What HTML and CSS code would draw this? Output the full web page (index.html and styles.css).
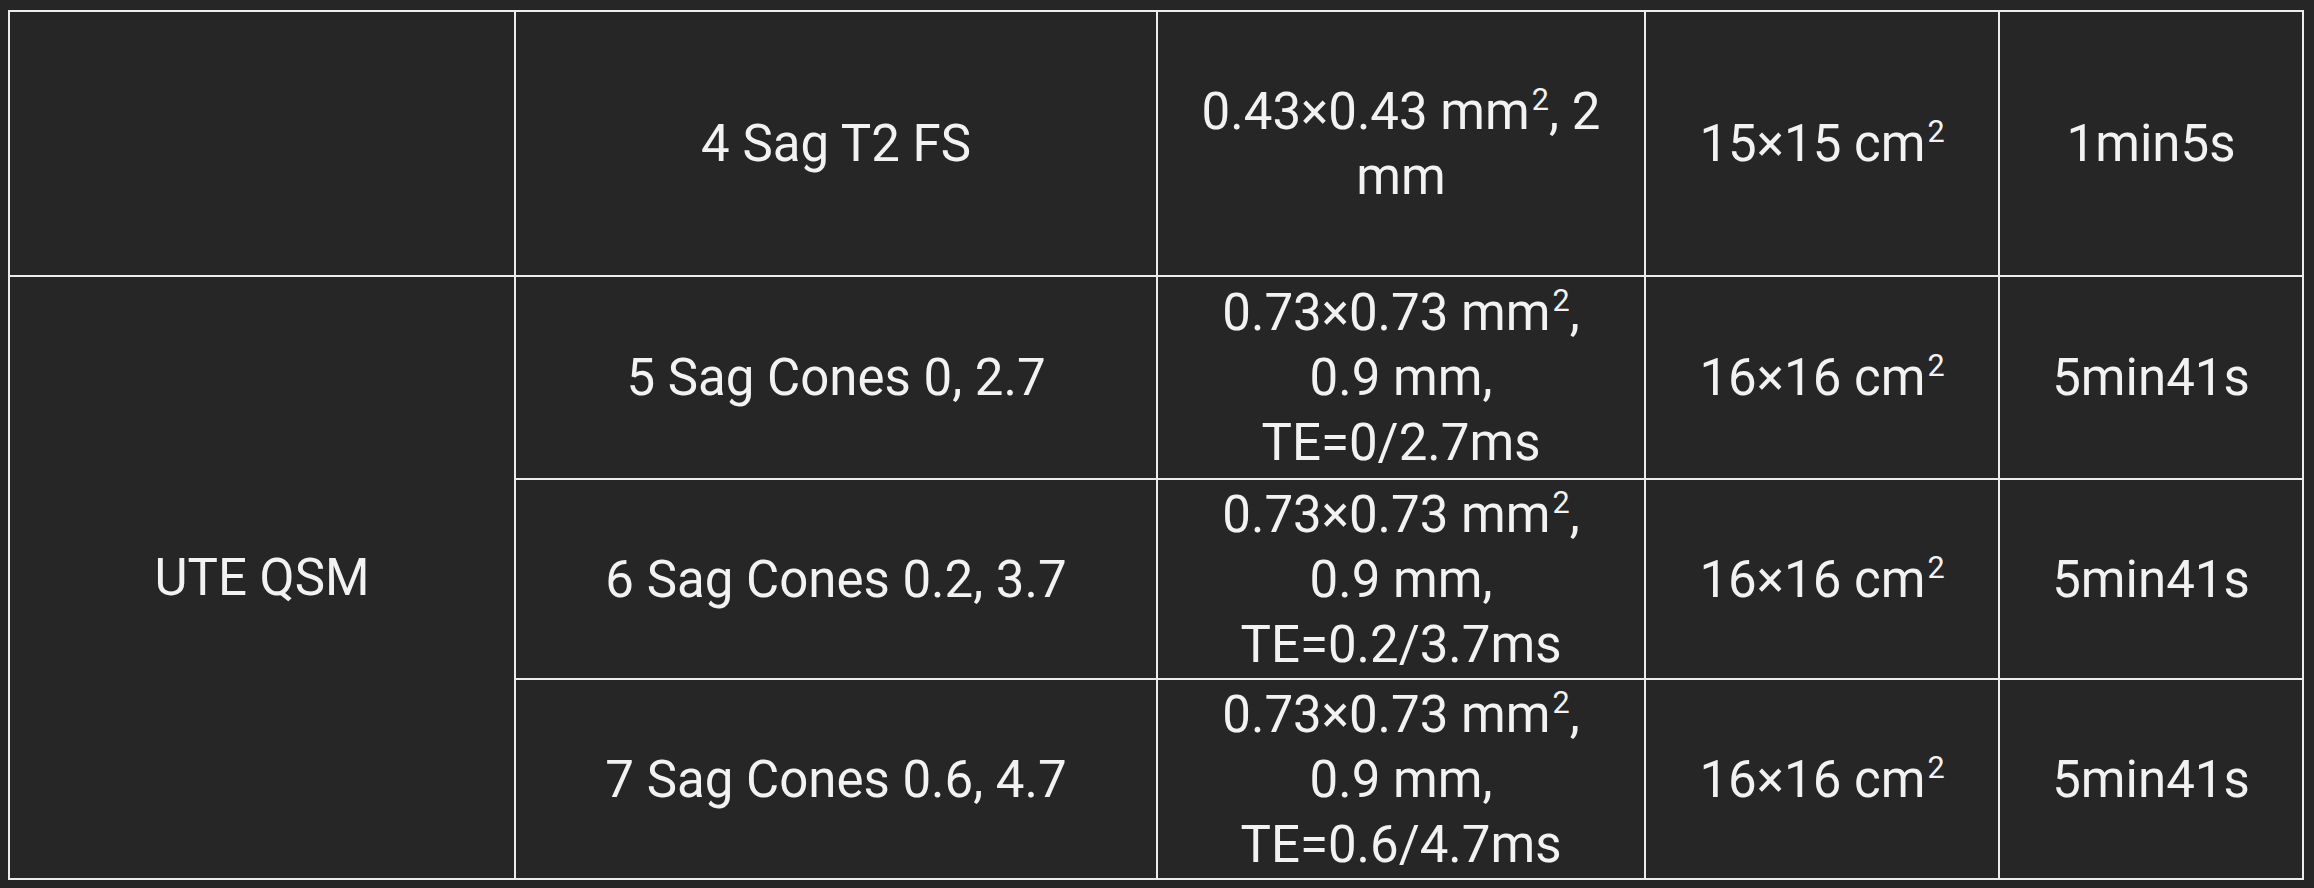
FILE: index.html
```html
<!DOCTYPE html>
<html>
<head>
<meta charset="utf-8">
<link rel="stylesheet" href="styles.css">
</head>
<body>
<table class="scan-table">
  <colgroup>
    <col class="c1"><col class="c2"><col class="c3"><col class="c4"><col class="c5">
  </colgroup>
  <tbody>
    <tr class="row-first">
      <td></td>
      <td>4 Sag T2 FS</td>
      <td>0.43×0.43 mm<sup class="sq">2</sup>, 2 mm</td>
      <td>15×15 cm<sup class="sq">2</sup></td>
      <td>1min5s</td>
    </tr>
    <tr class="row-second">
      <td rowspan="3">UTE QSM</td>
      <td>5 Sag Cones 0, 2.7</td>
      <td>0.73×0.73 mm<sup class="sq">2</sup>, 0.9 mm, TE=0/2.7ms</td>
      <td>16×16 cm<sup class="sq">2</sup></td>
      <td>5min41s</td>
    </tr>
    <tr class="row-other">
      <td>6 Sag Cones 0.2, 3.7</td>
      <td>0.73×0.73 mm<sup class="sq">2</sup>, 0.9 mm, TE=0.2/3.7ms</td>
      <td>16×16 cm<sup class="sq">2</sup></td>
      <td>5min41s</td>
    </tr>
    <tr class="row-other">
      <td>7 Sag Cones 0.6, 4.7</td>
      <td>0.73×0.73 mm<sup class="sq">2</sup>, 0.9 mm, TE=0.6/4.7ms</td>
      <td>16×16 cm<sup class="sq">2</sup></td>
      <td>5min41s</td>
    </tr>
  </tbody>
</table>
</body>
</html>
```

FILE: styles.css
```css
html, body {
  background: #262626;
}
body {
  margin: 8px;
  font-family: Roboto, "Liberation Sans", sans-serif;
  color: #f2f2f2;
}
.scan-table {
  margin-top: 2px;
  width: 2296px;
  table-layout: fixed;
  border-collapse: collapse;
  font-size: 51px;
  line-height: 65px;
}
.scan-table td {
  border: 2px solid #ececec;
  text-align: center;
  vertical-align: middle;
  padding: 0 28px;
}
.sq {
  display: inline-block;
  font-size: 0.6em;
  line-height: 1;
  vertical-align: 0.62em;
  margin-left: 2px;
}
.c1 { width: 506px; }
.c2 { width: 642px; }
.c3 { width: 488px; }
.c4 { width: 354px; }
.c5 { width: 304px; }
.row-first { height: 265px; }
.row-second { height: 203px; }
.row-other { height: 200px; }
```
